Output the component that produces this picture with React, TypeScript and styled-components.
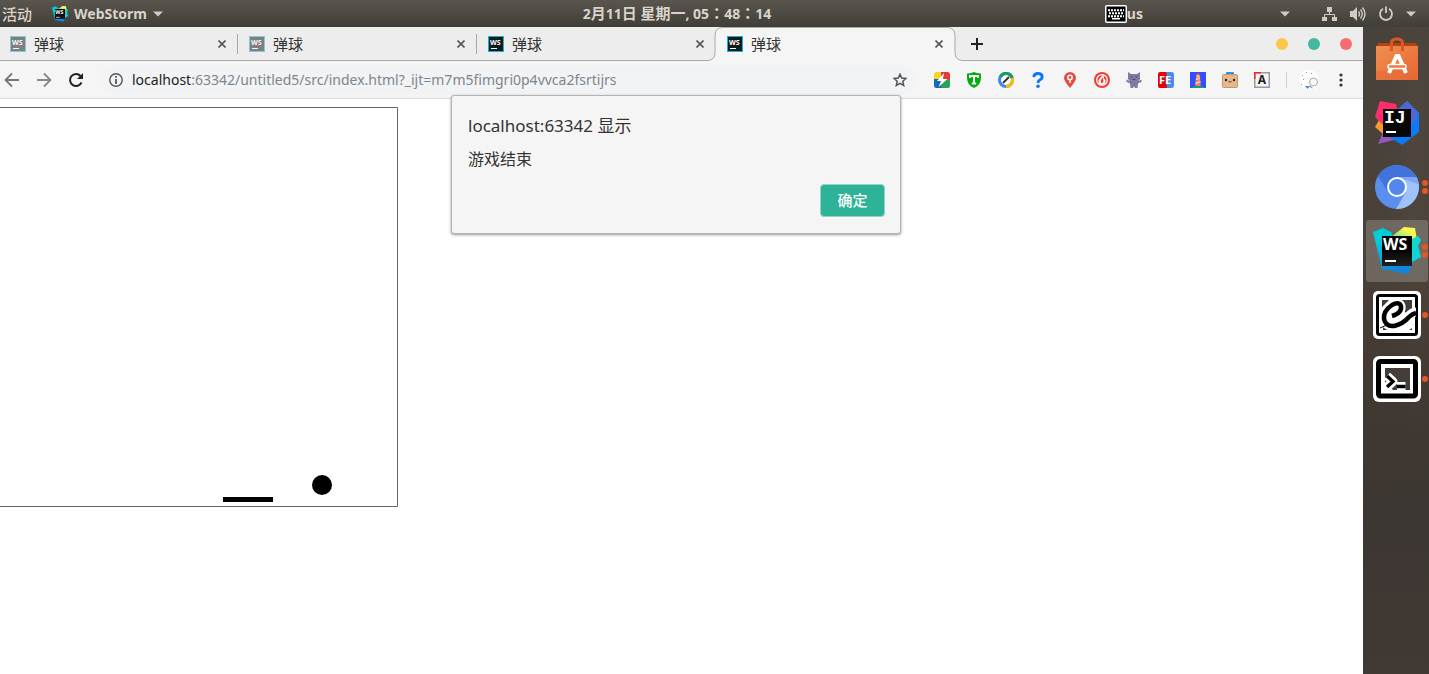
import React from "react";
import styled, { createGlobalStyle, css } from "styled-components";

const GlobalStyle = createGlobalStyle`
  * { box-sizing: border-box; }
  body {
    margin: 0;
    background: #fff;
    color: #333;
    font-family: "Noto Sans", "Noto Sans CJK SC", sans-serif;
  }
  button {
    margin: 0;
    padding: 0;
    border: 0;
    background: none;
    color: inherit;
    font: inherit;
  }
  svg { display: block; flex: none; }
`;

const Desktop = styled.div`
  display: flex;
  flex-direction: column;
  min-height: 100vh;
`;

/* ---------- system bar ---------- */

const SystemBar = styled.header`
  display: grid;
  grid-template-columns: 1fr auto 1fr;
  align-items: center;
  height: 27px;
  padding: 0 13px 0 2px;
  background: linear-gradient(#5a564e, #403e38);
  color: #d8d4cb;
  font-size: 14px;
  font-weight: 700;
  line-height: 20px;
`;

const BarGroup = styled.div<{ $gap: number; $end?: boolean }>`
  display: flex;
  align-items: center;
  gap: ${(p) => p.$gap}px;
  justify-content: ${(p) => (p.$end ? "flex-end" : "flex-start")};
`;

const BarButton = styled.button<{ $cjk?: boolean }>`
  display: flex;
  align-items: center;
  gap: 6px;
  white-space: nowrap;
  ${(p) =>
    p.$cjk &&
    css`
      font-size: 15px;
      font-weight: 500;
    `}
`;

const Clock = styled.button`
  margin-right: 64px;
  font-family: "Noto Sans", "Noto Sans CJK TC", sans-serif;
  white-space: nowrap;
`;

const Han = styled.span`
  font-size: 15px;
`;

const InputSource = styled(BarButton)`
  gap: 0;
  margin-right: 137px;
`;

const StatusButton = styled(BarButton)`
  gap: 12px;
`;

/* ---------- browser ---------- */

const Workspace = styled.div`
  display: flex;
  flex: 1;
`;

const Browser = styled.div`
  position: relative;
  display: flex;
  flex: 1;
  flex-direction: column;
  min-width: 0;
  background: #fff;
`;

const TabStrip = styled.div`
  display: flex;
  align-items: stretch;
  height: 34px;
  background: #ededed;
  box-shadow: inset 0 -1px #a8a8a8;
`;

const Tab = styled.div<{ $active?: boolean; $divider?: boolean }>`
  position: relative;
  display: flex;
  align-items: center;
  width: 239px;
  padding: 0 10px;
  &::after {
    content: "";
    position: absolute;
    right: 1px;
    top: 7px;
    width: 1px;
    height: 20px;
    background: ${(p) => (p.$divider ? "#a8a8a8" : "transparent")};
  }
  ${(p) =>
    p.$active &&
    css`
      &::after { display: none; }
    `}
`;

const ActiveShape = styled.svg`
  position: absolute;
  left: -12px;
  top: 0;
`;

const TabTitle = styled.button`
  position: relative;
  display: flex;
  flex: 1;
  align-items: center;
  gap: 8px;
  font-size: 15px;
  line-height: 20px;
`;

const IconButton = styled.button<{ $size?: number }>`
  position: relative;
  display: flex;
  align-items: center;
  justify-content: center;
  width: ${(p) => p.$size ?? 32}px;
  height: ${(p) => p.$size ?? 32}px;
`;

const NewTab = styled(IconButton)`
  align-self: center;
  margin-left: 5px;
`;

const WindowControls = styled.div`
  display: flex;
  align-items: center;
  gap: 20px;
  margin-left: auto;
  padding-right: 11px;
`;

const WindowDot = styled.button<{ $color: string }>`
  width: 12px;
  height: 12px;
  border-radius: 50%;
  background: ${(p) => p.$color};
`;

const Toolbar = styled.div`
  display: flex;
  align-items: center;
  height: 38px;
  padding-right: 6px;
  background: #f5f5f5;
  border-bottom: 1px solid #dcdcdc;
`;

const Navigation = styled.div`
  display: flex;
  width: 98px;
  margin-left: -4px;
`;

const AddressBar = styled.div`
  display: flex;
  flex: 1;
  align-items: center;
  min-width: 0;
  height: 28px;
  margin-left: 4px;
  padding: 0 2px 0 10px;
  border-radius: 14px;
  background: #f1f3f4;
  font-size: 14px;
  line-height: 20px;
`;

const HostLabel = styled.label`
  margin-left: 8px;
  color: #222;
`;

const AddressInput = styled.input`
  flex: 1;
  min-width: 0;
  padding: 0;
  border: 0;
  outline: 0;
  background: transparent;
  color: #80868b;
  font: inherit;
`;

const Extensions = styled.div`
  display: flex;
  margin-left: 8px;
`;

const Divider = styled.span`
  width: 1px;
  height: 16px;
  margin: 0 6px 0 8px;
  background: #d4d4d4;
`;

/* ---------- page ---------- */

const Page = styled.main`
  flex: 1;
  padding-top: 8px;
`;

const Dialog = styled.section`
  display: flex;
  flex-direction: column;
  width: 450px;
  padding: 19px 15px 16px 16px;
  border: 1px solid #b4b4b4;
  border-radius: 3px;
  background: #f5f5f5;
  box-shadow: 0 1px 3px rgba(0, 0, 0, 0.4);
`;

const DialogLayer = styled.div`
  position: absolute;
  top: 68px;
  left: 0;
  right: 11px;
  display: flex;
  justify-content: center;
`;

const DialogTitle = styled.h1`
  margin: 0;
  font-size: 17px;
  font-weight: 400;
  line-height: 22px;
`;

const DialogText = styled.p`
  margin: 11px 0 14px;
  font-size: 16px;
  line-height: 22px;
`;

const ConfirmButton = styled.button`
  align-self: flex-end;
  width: 65px;
  height: 33px;
  padding-bottom: 2px;
  border: 1px solid #8fd6c6;
  border-radius: 4px;
  background: #2eb398;
  color: #fff;
  font-size: 15px;
  font-weight: 500;
`;

/* ---------- dock ---------- */

const Dock = styled.nav`
  display: flex;
  flex-direction: column;
  align-items: center;
  gap: 2px;
  width: 66px;
  padding: 1px 1px 0 3px;
  background:
    radial-gradient(ellipse at 80% 20%, rgba(95, 84, 72, 0.25), transparent 40%),
    linear-gradient(#48423c, #4a4139 35%, #413932 55%, #3c3632 75%, #413934);
`;

const DockItem = styled.button<{ $active?: boolean }>`
  position: relative;
  display: flex;
  align-items: center;
  justify-content: center;
  width: 62px;
  height: 62px;
  border-radius: 3px;
  background: ${(p) => (p.$active ? "rgba(255,255,255,0.2)" : "transparent")};
`;

const RunningDots = styled.span`
  position: absolute;
  right: 0;
  top: 0;
  bottom: 0;
  display: flex;
  flex-direction: column;
  justify-content: center;
  gap: 2px;
  i {
    width: 6px;
    height: 6px;
    border-radius: 50%;
    background: #e95420;
  }
`;

/* ---------- drawings ---------- */

const Caret = () => (
  <svg width="10" height="6" viewBox="0 0 10 6">
    <path d="M0 .5h10L5 5.5z" fill="#cfccc4" />
  </svg>
);

const WebStormLogo = ({ size }: { size: number }) => (
  <svg width={size} height={size} viewBox="0 0 48 48">
    <defs>
      <linearGradient id="wsBody" x1="0" y1="0" x2="0.3" y2="1">
        <stop offset="0.3" stopColor="#00cdd7" />
        <stop offset="1" stopColor="#1583dc" />
      </linearGradient>
      <linearGradient id="wsRay" x1="1" y1="0" x2="0" y2="1">
        <stop offset="0.3" stopColor="#fcf84a" />
        <stop offset="1" stopColor="#35d8b0" />
      </linearGradient>
      <linearGradient id="wsBox" x1="0" y1="0" x2="0" y2="1">
        <stop offset="0.4" stopColor="#000" />
        <stop offset="1" stopColor="#222" />
      </linearGradient>
    </defs>
    <path d="M0 5 10 1l8 4 2 5 24 6 4 14-7 4-6 13-26-5z" fill="url(#wsBody)" />
    <path d="M18 10 31 0l11 1 2 12-6 2z" fill="url(#wsRay)" />
    <path d="m37 13 8-4 3 4-3 6 3 11-9 5z" fill="#0ed6d0" />
    <rect x="9" y="9" width="30" height="30" fill="url(#wsBox)" />
    <text x="10" y="23" fontSize="16" fontWeight="700" fontFamily="Noto Sans, sans-serif" fill="#fff">WS</text>
    <path d="M12 34h11" stroke="#fff" strokeWidth="2" />
  </svg>
);

const Favicon = ({ faded }: { faded?: boolean }) => (
  <svg width="16" height="16" viewBox="0 0 16 16" opacity={faded ? 0.55 : 1}>
    <rect width="16" height="16" fill="#12b4d8" />
    <rect x="1" y="1" width="14" height="14" fill={faded ? "#2b2324" : "#14191b"} />
    <text x="2" y="9" fontSize="7" fontWeight="700" fontFamily="Noto Sans, sans-serif" fill="#fff">WS</text>
    <path d="M3 12.5h6" stroke="#fff" />
  </svg>
);

const Cross = () => (
  <svg width="8" height="8" viewBox="0 0 8 8">
    <path d="m.5.5 7 7m0-7-7 7" stroke="#555" strokeWidth="1.6" />
  </svg>
);

const KeyboardIcon = () => (
  <svg width="22" height="18" viewBox="0 0 22 18">
    <rect x=".75" y=".75" width="20.5" height="16.5" rx="1" fill="#000" stroke="#fff" strokeWidth="1.5" />
    <path d="M3 5.2h16M4 8.2h15M3 11.2h16" stroke="#fff" strokeWidth="2" strokeDasharray="2 1" />
    <path d="M7 13.700h8" stroke="#fff" strokeWidth="1.6" />
  </svg>
);

const NetworkIcon = () => (
  <svg width="16" height="16" viewBox="0 0 16 16">
    <path d="M5 1h5v5H5zM0 11h5v4H0zM10 11h5v4h-5z" fill="#cfccc4" />
    <path d="M7.5 6v3M2.5 11V8.5h10V11" fill="none" stroke="#cfccc4" />
  </svg>
);

const VolumeIcon = () => (
  <svg width="16" height="16" viewBox="0 0 16 16">
    <path d="M0 5h3l4-4v14l-4-4H0z" fill="#cfccc4" />
    <path d="M8.5 5.5q2 2.5 0 5M10.5 3.5q3.600 4.500 0 9M12.500 1.500q5 6.500 0 13" fill="none" stroke="#cfccc4" strokeWidth="1.4" />
  </svg>
);

const PowerIcon = () => (
  <svg width="16" height="16" viewBox="0 0 16 16">
    <path d="M5 2.800a6 6 0 1 0 6 0M8 .5v6.500" fill="none" stroke="#cfccc4" strokeWidth="1.800" />
  </svg>
);

const extensionIcons: { name: string; art: React.ReactNode }[] = [
  {
    name: "Flash",
    art: (
      <>
        <clipPath id="flash"><rect width="16" height="16" rx="2.500" /></clipPath>
        <g clipPath="url(#flash)">
          <path d="M0 0h8v8H0z" fill="#f8d525" />
          <path d="M7 0h9v8H7z" fill="#e33b35" />
          <path d="M0 7h8v9H0z" fill="#1768b8" />
          <path d="M7 8h9v8H7z" fill="#28a457" />
        </g>
        <path d="M10 1 3 9h4l-2.500 6L13.500 7H9z" fill="#fff" />
      </>
    ),
  },
  {
    name: "Shield",
    art: (
      <>
        <path d="M8 0q3 1.700 7 1.400v4q0 7.600-7 10.600Q1 13 1 5.400v-4Q5 1.700 8 0z" fill="#00ad0d" />
        <path d="M4 6V4h8v2M8 4v7.500M5.800 11.500h4.400" fill="none" stroke="#fff" strokeWidth="2" />
      </>
    ),
  },
  {
    name: "Compass",
    art: (
      <>
        <circle cx="8" cy="8" r="6.500" fill="#fff" stroke="#4285f4" strokeWidth="3" />
        <path d="M2.400 4.700A6.500 6.500 0 0 1 14.200 6" fill="none" stroke="#12a05c" strokeWidth="3" />
        <path d="M14.200 6A6.500 6.500 0 0 1 8 14.500" fill="none" stroke="#fbbc05" strokeWidth="3" />
        <path d="m5 11 6-6" stroke="#333" strokeWidth="2" />
      </>
    ),
  },
  {
    name: "Help",
    art: (
      <>
        <path d="M3.800 5.200Q4 1.500 8 1.500t4.200 3.300Q12.200 7 9.700 8 8 8.800 8 11" fill="none" stroke="#0877f9" strokeWidth="2.800" />
        <circle cx="8" cy="14.200" r="1.800" fill="#0877f9" />
      </>
    ),
  },
  {
    name: "Pin",
    art: (
      <>
        <path d="M8 0a6 6 0 0 1 6 6q0 3-6 10Q2 9 2 6a6 6 0 0 1 6-6z" fill="#e94b40" />
        <circle cx="8" cy="5.500" r="2.200" fill="none" stroke="#fff" strokeWidth="1.500" />
        <path d="M8 7.500V11" stroke="#fff" strokeWidth="1.500" />
      </>
    ),
  },
  {
    name: "Flame",
    art: (
      <>
        <circle cx="8" cy="8" r="8" fill="#f03b31" />
        <circle cx="8" cy="8" r="5.300" fill="none" stroke="#fff" strokeWidth="1.300" />
        <path d="M9.500 2 4.500 8q-.5 4 3 5 4.500-.5 4-5L10 6.500z" fill="#fff" />
        <path d="m9 5-2.500 4 1 2.500 2-1.500z" fill="#f03b31" />
      </>
    ),
  },
  {
    name: "Cat",
    art: (
      <>
        <path d="m2 0 3 2h6l3-2v7l-2 2.500 3-2 1 2-4 2-.5 4.500H9l-1-2-1 2H4.500L4 11.500l-4-2 1-2 3 2L2 7z" fill="#8378a0" />
        <path d="M4.500 5h2M9.500 5h2M6.500 7.500h3" stroke="#514969" strokeWidth="1.200" />
      </>
    ),
  },
  {
    name: "Front end helper",
    art: (
      <>
        <rect width="16" height="16" rx="2.500" fill="#4a8bf0" />
        <path d="M2.500 0H8l1 5-1 6 1 5H2.500A2.500 2.500 0 0 1 0 13.500v-11A2.500 2.500 0 0 1 2.500 0z" fill="#e60000" />
        <text x="1" y="12" fontSize="11" fontWeight="700" fontFamily="Noto Sans, sans-serif" fill="#fff">FE</text>
      </>
    ),
  },
  {
    name: "Lighthouse",
    art: (
      <>
        <rect width="16" height="16" fill="#304ffe" />
        <path d="M0 16q8-4 16 0z" fill="#10a860" />
        <path d="M6.200 3h3.600l1 11H5.200z" fill="#f5786b" />
        <path d="m6 7.500 4-1.500M5.500 11.500l5-2" stroke="#f5cfc9" strokeWidth="1.400" />
        <path d="M6 3h4L8 .8z" fill="#ed5b49" />
        <path d="M6.500 3.500h3v1.500h-3z" fill="#ffd54f" />
      </>
    ),
  },
  {
    name: "Box face",
    art: (
      <>
        <path d="M4 3V1q0-1 1-1h6q1 0 1 1v2z" fill="#2894ed" />
        <rect x=".5" y="2.500" width="15" height="13" rx="1" fill="#e5b98d" stroke="#c6956a" />
        <circle cx="4" cy="8" r="1.200" fill="#222" />
        <circle cx="12" cy="8" r="1.200" fill="#222" />
        <path d="M6.500 9.500q.700 1 1.500 0 .800 1 1.500 0" fill="none" stroke="#222" strokeWidth=".9" />
      </>
    ),
  },
  {
    name: "Letter A",
    art: (
      <>
        <rect x=".75" y=".75" width="14.500" height="14.500" fill="#f5f5f5" stroke="#9b9b9b" strokeWidth="1.500" />
        <path d="M.75 7V.75H7" fill="none" stroke="#f5222d" strokeWidth="1.500" />
        <text x="8" y="12" textAnchor="middle" fontSize="12" fontWeight="700" fontFamily="Noto Sans, sans-serif" fill="#222">A</text>
      </>
    ),
  },
];

const SoftwareLogo = () => (
  <svg width="42" height="44" viewBox="0 0 42 44">
    <defs>
      <linearGradient id="bag" x1="0" y1="0" x2="1" y2="1">
        <stop offset="0" stopColor="#ee9150" />
        <stop offset="1" stopColor="#ea6430" />
      </linearGradient>
    </defs>
    <path d="M2 6h38l2 5H0z" fill="#b8420f" />
    <path d="M0 9h42v34H0z" fill="url(#bag)" />
    <path d="M0 34h42v9H0z" fill="#e56c38" opacity=".6" />
    <path d="M15.500 14V6q0-4 5.500-4t5.500 4v8" fill="none" stroke="#d75922" strokeWidth="3" />
    <path d="M13 36 20.500 19h2L30 36" fill="none" stroke="#fff" strokeWidth="4" />
    <rect x="12" y="27.500" width="18" height="4" rx="2" fill="#ef7b43" stroke="#fff" strokeWidth="1.500" />
  </svg>
);

const IdeaLogo = () => (
  <svg width="46" height="46" viewBox="0 0 46 46">
    <path d="M1 27 5 20l10 0 4 8-10 6z" fill="#f99a29" />
    <path d="M1 17 6 1l16 3 4 14-17 7z" fill="#fe2e6d" />
    <path d="m4 44 6-14 14 6 0 3z" fill="#9358bb" />
    <path d="m24 9 9-8 12 12v19L28 45 14 36z" fill="#087cfa" />
    <path d="m24 9 9-8 12 12-7 11z" fill="#4d68ce" />
    <rect x="9" y="9" width="28" height="28" fill="#080808" />
    <text x="10" y="23" fontSize="18" fontWeight="700" fontFamily="Liberation Mono, monospace" fill="#fff">IJ</text>
    <path d="M12 32h10" stroke="#fff" strokeWidth="2" />
  </svg>
);

const ChromiumLogo = () => (
  <svg width="44" height="44" viewBox="0 0 44 44">
    <circle cx="22" cy="22" r="22" fill="#5a8ff0" />
    <path d="M3 11A22 22 0 0 1 41.500 12H22L13 27z" fill="#4273dc" />
    <path d="M41.500 12A22 22 0 0 1 21 44l10-17L22 12z" fill="#a0c2fa" />
    <path d="M22 12h19.500l2 7z" fill="#7099e8" opacity=".7" />
    <circle cx="22" cy="22" r="9" fill="#5288ec" stroke="#fff" strokeWidth="2" />
  </svg>
);

const ScriptLogo = () => (
  <svg width="48" height="48" viewBox="0 0 48 48">
    <rect width="48" height="48" rx="5" fill="#fff" />
    <rect x="4.500" y="4.500" width="39" height="39" rx="2" fill="#fff" stroke="#000" strokeWidth="3" />
    <path d="M9 9h7l-7 7zM28 9h11v14l-8-2zM36 39l3-2v2zM10 36l5 3h-5z" fill="#453e38" />
    <path
      d="M20 24Q29 22 28 15 26 10 19 14 10 20 11 28q2 8 10 7 9-2 15-10 3-4 7-4"
      fill="none"
      stroke="#fff"
      strokeWidth="9"
    />
    <path
      d="M19 25Q29 22 28 15 26 10 19 14 10 20 11 28q2 8 10 7 9-2 15-9 3-3 7-4"
      fill="none"
      stroke="#000"
      strokeWidth="4.500"
    />
    <path d="M7 37 16 33" stroke="#000" />
  </svg>
);

const TerminalLogo = () => (
  <svg width="48" height="46" viewBox="0 0 48 46">
    <rect width="48" height="46" rx="6" fill="#fff" />
    <rect x="5.500" y="5.500" width="37" height="34.500" rx="2" fill="#fff" stroke="#000" strokeWidth="5" />
    <path d="M12 12h25v22H20l-8-8z" fill="#453e38" />
    <path d="m14 20 6 5.500-6 5.500M24 30.500h8.500" fill="none" stroke="#fff" strokeWidth="9" strokeLinejoin="round" />
    <path d="m14 20 6 5.500-6 5.500M24 30.500h8.500" fill="none" stroke="#000" strokeWidth="3.300" />
  </svg>
);

const GameBoard = () => (
  <svg width="398" height="400" viewBox="0 0 398 400" role="img" aria-label="弹球">
    <path d="M0 .5h397.500v399H0" fill="none" stroke="#666" />
    <rect x="223" y="390" width="50" height="5" />
    <circle cx="322" cy="378" r="10" />
  </svg>
);

const dockItems = [
  { name: "Ubuntu Software", logo: <SoftwareLogo />, windows: 0 },
  { name: "IntelliJ IDEA", logo: <IdeaLogo />, windows: 0 },
  { name: "Chromium", logo: <ChromiumLogo />, windows: 2 },
  { name: "WebStorm", logo: <WebStormLogo size={48} />, windows: 2, active: true },
  { name: "Script", logo: <ScriptLogo />, windows: 1 },
  { name: "Terminal", logo: <TerminalLogo />, windows: 1 },
];

const tabs = [
  { faded: true, divider: true },
  { faded: true, divider: true },
  { faded: false, divider: false },
  { faded: false, divider: false, active: true },
];

export default function App() {
  return (
    <Desktop>
      <GlobalStyle />
      <SystemBar>
        <BarGroup $gap={20}>
          <BarButton $cjk>活动</BarButton>
          <BarButton>
            <WebStormLogo size={16} />
            WebStorm
            <Caret />
          </BarButton>
        </BarGroup>
        <Clock>
          2<Han>月</Han>11<Han>日</Han> <Han>星期一</Han>, 05<Han>：</Han>48<Han>：</Han>14
        </Clock>
        <BarGroup $gap={0} $end>
          <InputSource>
            <KeyboardIcon />
            us
          </InputSource>
          <BarGroup $gap={32}>
            <BarButton aria-label="Indicators"><Caret /></BarButton>
            <StatusButton aria-label="System">
              <NetworkIcon />
              <VolumeIcon />
              <PowerIcon />
              <Caret />
            </StatusButton>
          </BarGroup>
        </BarGroup>
      </SystemBar>
      <Workspace>
        <Browser>
          <TabStrip>
            {tabs.map((tab, i) => (
              <Tab key={i} $active={tab.active} $divider={tab.divider}>
                {tab.active && (
                  <ActiveShape width="262" height="34" viewBox="0 0 262 34">
                    <path
                      d="M0 34v-.5h2q8 0 8-8V8.500q0-8 8-8h224q8 0 8 8v17q0 8 8 8h4v.5z"
                      fill="#f5f5f5"
                    />
                    <path
                      d="M0 33.500h2q8 0 8-8V8.500q0-8 8-8h224q8 0 8 8v17q0 8 8 8h4"
                      fill="none"
                      stroke="#a8a8a8"
                    />
                  </ActiveShape>
                )}
                <TabTitle>
                  <Favicon faded={tab.faded} />
                  弹球
                </TabTitle>
                <IconButton $size={14} aria-label="Close tab"><Cross /></IconButton>
              </Tab>
            ))}
            <NewTab aria-label="New tab">
              <svg width="12" height="12" viewBox="0 0 12 12">
                <path d="M6 0v12M0 6h12" stroke="#222" strokeWidth="2" />
              </svg>
            </NewTab>
            <WindowControls>
              <WindowDot $color="#fac84b" aria-label="Minimize" />
              <WindowDot $color="#43b89e" aria-label="Maximize" />
              <WindowDot $color="#f66c72" aria-label="Close" />
            </WindowControls>
          </TabStrip>
          <Toolbar>
            <Navigation>
              <IconButton aria-label="Back">
                <svg width="16" height="16" viewBox="0 0 16 16">
                  <path d="M15 8H2M8 1.500 1.500 8 8 14.500" fill="none" stroke="#777" strokeWidth="1.800" />
                </svg>
              </IconButton>
              <IconButton aria-label="Forward">
                <svg width="16" height="16" viewBox="0 0 16 16">
                  <path d="M1 8h13M8 1.500 14.500 8 8 14.500" fill="none" stroke="#888" strokeWidth="1.800" />
                </svg>
              </IconButton>
              <IconButton aria-label="Reload">
                <svg width="16" height="16" viewBox="0 0 16 16">
                  <path d="M13.500 10.500A6 6 0 1 1 12.500 4" fill="none" stroke="#222" strokeWidth="2" />
                  <path d="M15 1v6H9z" fill="#222" />
                </svg>
              </IconButton>
            </Navigation>
            <AddressBar>
              <IconButton $size={16} aria-label="Site information">
                <svg width="14" height="14" viewBox="0 0 14 14">
                  <circle cx="7" cy="7" r="6.200" fill="none" stroke="#555" strokeWidth="1.400" />
                  <path d="M7 3v1.800M7 6v5" stroke="#555" strokeWidth="1.800" />
                </svg>
              </IconButton>
              <HostLabel htmlFor="address">localhost</HostLabel>
              <AddressInput
                id="address"
                defaultValue=":63342/untitled5/src/index.html?_ijt=m7m5fimgri0p4vvca2fsrtijrs"
              />
              <IconButton aria-label="Bookmark">
                <svg width="14" height="14" viewBox="0 0 14 14">
                  <path
                    d="m7 1.200 1.700 3.900 4.300.4-3.200 2.800.9 4.200L7 10.300l-3.700 2.200.9-4.200L1 5.500l4.300-.4z"
                    fill="none"
                    stroke="#555"
                    strokeWidth="1.500"
                  />
                </svg>
              </IconButton>
            </AddressBar>
            <Extensions>
              {extensionIcons.map((icon) => (
                <IconButton key={icon.name} aria-label={icon.name}>
                  <svg width="16" height="16" viewBox="0 0 16 16">{icon.art}</svg>
                </IconButton>
              ))}
            </Extensions>
            <Divider />
            <IconButton aria-label="Profile">
              <svg width="20" height="20" viewBox="0 0 20 20">
                <circle cx="10" cy="10" r="10" fill="#fff" />
                <circle cx="14.500" cy="12" r="4" fill="#f8f8f8" stroke="#a9a9a9" />
                <path d="M6 16h5l-2.500 3z" fill="#5686b8" />
                <path d="m3 5 1 1M7 2l1 1M4 10l1-1M12 3l1 1M2 14l1 1" stroke="#b98a62" />
                <path d="m10.500 16 3 2" stroke="#777" />
              </svg>
            </IconButton>
            <IconButton aria-label="Menu">
              <svg width="4" height="14" viewBox="0 0 4 14">
                <circle cx="2" cy="2" r="1.600" fill="#333" />
                <circle cx="2" cy="7" r="1.600" fill="#333" />
                <circle cx="2" cy="12" r="1.600" fill="#333" />
              </svg>
            </IconButton>
          </Toolbar>
          <Page>
            <GameBoard />
          </Page>
          <DialogLayer>
            <Dialog role="alertdialog" aria-labelledby="dialog-title">
              <DialogTitle id="dialog-title">localhost:63342 显示</DialogTitle>
              <DialogText>游戏结束</DialogText>
              <ConfirmButton>确定</ConfirmButton>
            </Dialog>
          </DialogLayer>
        </Browser>
        <Dock>
          {dockItems.map((item) => (
            <DockItem key={item.name} $active={item.active} aria-label={item.name}>
              {item.logo}
              <RunningDots>
                {Array.from({ length: item.windows }, (_, i) => (
                  <i key={i} />
                ))}
              </RunningDots>
            </DockItem>
          ))}
        </Dock>
      </Workspace>
    </Desktop>
  );
}
